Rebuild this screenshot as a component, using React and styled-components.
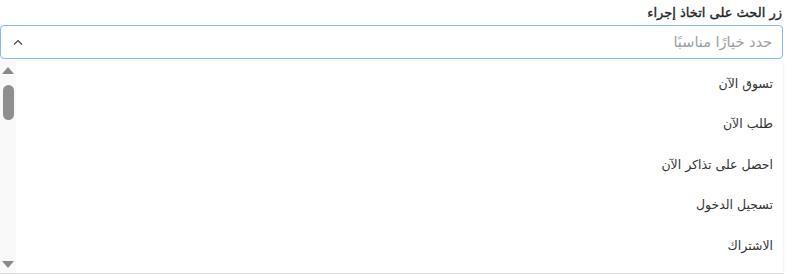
import React from "react";
import styled, { createGlobalStyle } from "styled-components";

const GlobalStyle = createGlobalStyle`
    html, body {
        margin: 0;
        padding: 0;
        background: #ffffff;
    }
    body {
        font-family: "DejaVu Sans", "Noto Sans", sans-serif;
    }
`;

const Field = styled.div`
    width: 783px;
    direction: rtl;
    display: flex;
    flex-direction: column;
`;

const Label = styled.label`
    font-size: 13px;
    font-weight: 400;
    -webkit-text-stroke: 0.35px #212529;
    color: #212529;
    line-height: 17px;
    padding: 4px 1px 4px 0;
`;

const Control = styled.div`
    height: 32px;
    border: 1px solid #86b7fe;
    border-radius: 4px;
    display: flex;
    align-items: center;
    justify-content: space-between;
    padding: 0 10px 0 12px;
`;

const Placeholder = styled.span`
    font-size: 14.5px;
    color: #9a9fa5;
`;

const Caret = styled.svg`
    width: 10px;
    height: 6px;
    display: block;
`;

const Menu = styled.div`
    margin-top: 2px;
    height: 212px;
    display: flex;
    background: #fff;
    border-bottom: 1px solid #dedede;
    box-shadow: 0 1px 3px rgba(0, 0, 0, 0.12);
`;

const Options = styled.ul`
    list-style: none;
    margin: 0;
    padding: 2px 0 0;
    flex: 1;
`;

const Option = styled.li`
    height: 40.5px;
    display: flex;
    align-items: center;
    padding-right: 10px;
    font-size: 12.5px;
    color: #333;
`;

const Scrollbar = styled.div`
    width: 16px;
    background: #f9f9f9;
    display: flex;
    flex-direction: column;
    align-items: center;
    padding: 6px 0 5px;
    box-sizing: border-box;
`;

const Arrow = styled.div`
    width: 0;
    height: 0;
    border-left: 6px solid transparent;
    border-right: 6px solid transparent;
    ${(p) =>
        p.$down
            ? "border-top: 7px solid #8a8a8a; margin-top: auto;"
            : "border-bottom: 7px solid #8a8a8a;"}
`;

const Thumb = styled.div`
    width: 11px;
    height: 35px;
    margin-top: 11px;
    border-radius: 6px;
    background: #8f8f8f;
`;

const options = [
    "تسوق الآن",
    "طلب الآن",
    "احصل على تذاكر الآن",
    "تسجيل الدخول",
    "الاشتراك",
];

export default function App() {
    return (
        <>
            <GlobalStyle />
            <Field>
                <Label>زر الحث على اتخاذ إجراء</Label>
                <Control>
                    <Placeholder>حدد خيارًا مناسبًا</Placeholder>
                    <Caret viewBox="0 0 10 6">
                        <path d="M1 5.5 L5 1.5 L9 5.5" fill="none" stroke="#444" strokeWidth="1.2" />
                    </Caret>
                </Control>
                <Menu>
                    <Options>
                        {options.map((o) => (
                            <Option key={o}>{o}</Option>
                        ))}
                    </Options>
                    <Scrollbar>
                        <Arrow />
                        <Thumb />
                        <Arrow $down />
                    </Scrollbar>
                </Menu>
            </Field>
        </>
    );
}
